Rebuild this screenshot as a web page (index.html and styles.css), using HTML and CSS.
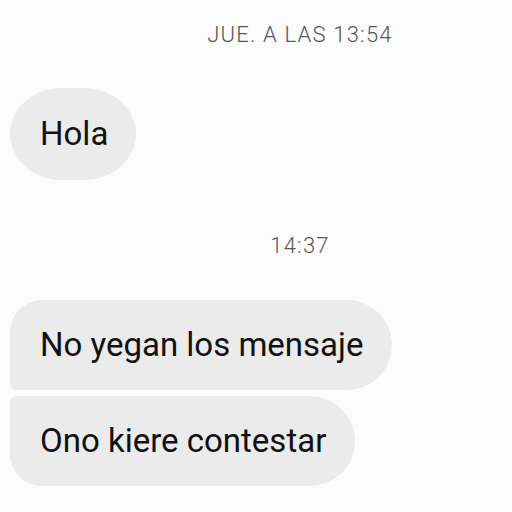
FILE: index.html
```html
<!DOCTYPE html>
<html lang="es">
<head>
    <meta charset="UTF-8" />
    <title>Mensajes</title>
    <link rel="stylesheet" href="styles.css">
</head>
<body>

    <div class="chat">
        <div class="stamp stamp-top">JUE. A LAS 13:54</div>

        <div class="group">
            <div class="bubble single">Hola</div>
        </div>

        <div class="stamp stamp-mid">14:37</div>

        <div class="group">
            <div class="bubble first">No yegan los mensaje</div>
            <div class="bubble last">Ono kiere contestar</div>
        </div>
    </div>

</body>
</html>
```

FILE: styles.css
```css
body {
    margin: 0;
    background-color: #fcfcfc;
    font-family: Roboto, "Liberation Sans", Arial, sans-serif;
}

.chat {
    display: flex;
    flex-direction: column;
    padding: 23px 10px 0 10px;
}

.stamp {
    font-size: 22px;
    line-height: 24px;
    font-weight: 300;
    letter-spacing: 1.2px;
    color: #555;
    text-align: center;
    padding-left: 88px;
}

.stamp-mid {
    margin: 54px 0 42px 0;
}

.group {
    display: flex;
    flex-direction: column;
    align-items: flex-start;
    gap: 6px;
}

.stamp-top + .group {
    margin-top: 41px;
}

.bubble {
    background-color: #ebebeb;
    color: #111;
    font-size: 33px;
    line-height: 40px;
    padding: 25px 29px 25px 30px;
    border-radius: 45px;
}

.bubble.single {
    padding: 26px 28px 26px 30px;
    border-radius: 52px / 46px;
}

.bubble.first {
    border-radius: 32px 45px 45px 6px;
}

.bubble.last {
    border-radius: 6px 45px 45px 32px;
}
```
